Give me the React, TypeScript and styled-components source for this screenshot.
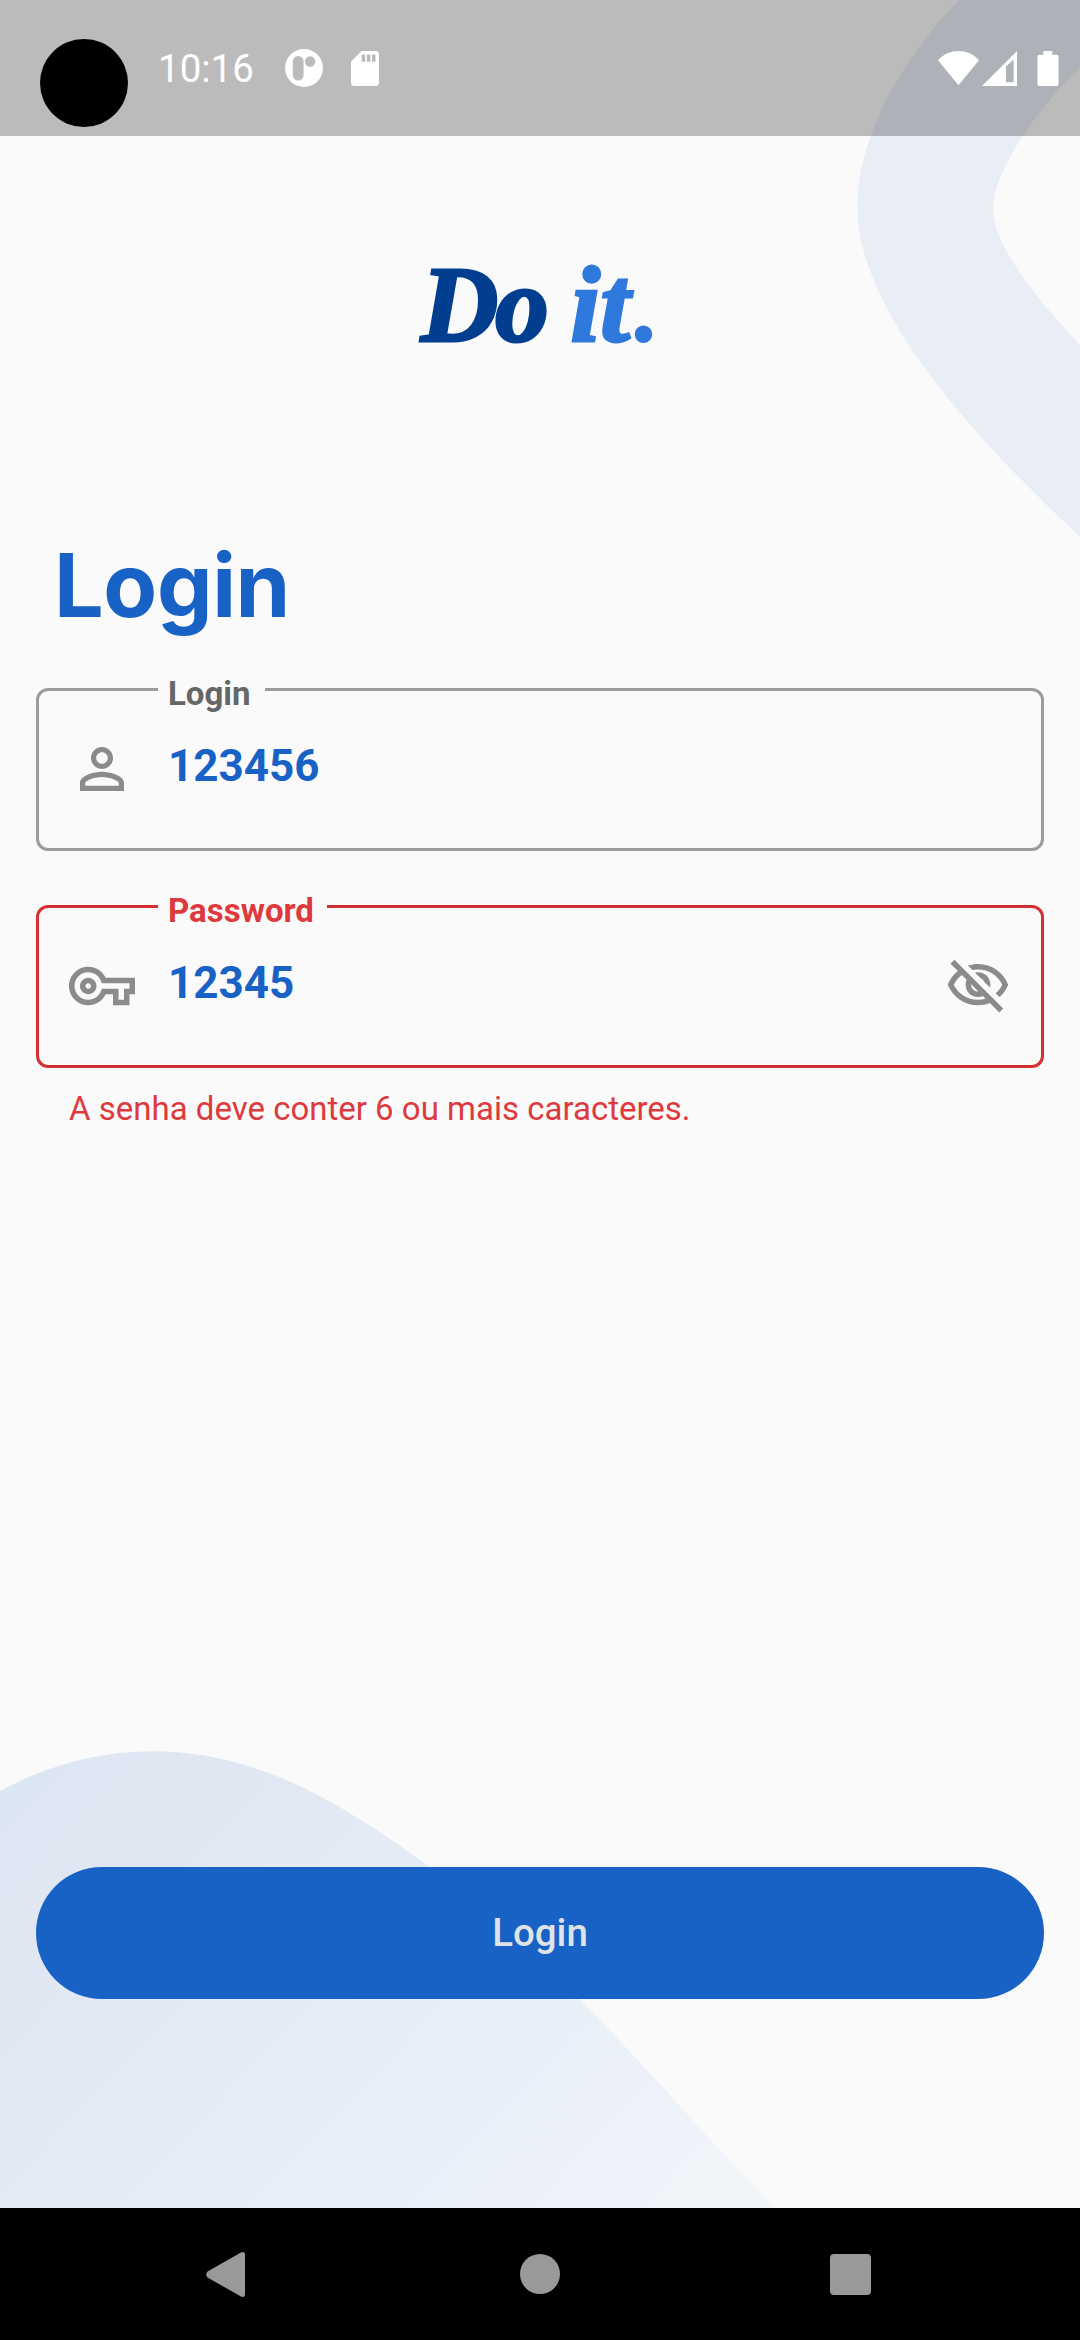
import React from "react";
import styled, { createGlobalStyle } from "styled-components";

const Global = createGlobalStyle`
  * { box-sizing: border-box; }
  html, body { margin: 0; padding: 0; background: #fafafa; }
  body { font-family: Roboto, "Liberation Sans", sans-serif; }
`;

const Screen = styled.div`
  position: relative;
  isolation: isolate;
  display: flex;
  flex-direction: column;
  width: 1080px;
  height: 2340px;
  overflow: hidden;
  background: #fafafa;
`;

const Backdrop = styled.svg`
  position: absolute;
  inset: 0;
  z-index: -1;
  display: block;
`;

const StatusBar = styled.header`
  display: flex;
  align-items: flex-start;
  height: 136px;
  padding: 39px 21px 0 40px;
  background: rgba(0, 0, 0, 0.25);
  color: #fff;
`;

const Camera = styled.span`
  width: 88px;
  height: 88px;
  border-radius: 50%;
  background: #000;
`;

const Clock = styled.time`
  margin: 7px 0 0 30px;
  width: 97px;
  font-size: 38.5px;
  line-height: 46px;
  white-space: nowrap;
`;

const StatusIcons = styled.div<{ $push?: boolean }>`
  display: flex;
  align-items: center;
  margin: 10px 0 0 ${(p) => (p.$push ? "auto" : "30px")};
  height: 38px;
`;

const StatusGlyph = styled.svg<{ $gap: number }>`
  display: block;
  flex: none;
  margin-left: ${(p) => p.$gap}px;
  fill: #fff;
`;

const Content = styled.main`
  display: flex;
  flex-direction: column;
  flex: 1;
  padding: 0 36px;
`;

const Logo = styled.div`
  display: flex;
  align-items: baseline;
  height: 120px;
  margin-top: 109px;
  padding-left: 385px;
  font-family: "Liberation Serif", serif;
  font-style: italic;
  font-weight: 700;
  font-size: 107px;
  line-height: 120px;
  white-space: pre;
`;

const LogoWord = styled.span<{ $color: string; $shift?: number; $stroke?: number; $tracking?: number }>`
  margin-left: ${(p) => p.$shift ?? 0}px;
  color: ${(p) => p.$color};
  letter-spacing: ${(p) => p.$tracking ?? 0}px;
  -webkit-text-stroke: ${(p) => p.$stroke ?? 3}px ${(p) => p.$color};
`;

const Title = styled.h1`
  margin: 167px 0 0 18px;
  height: 106px;
  color: #1861c5;
  font-family: Inter, Roboto, sans-serif;
  font-weight: 700;
  font-size: 88px;
  line-height: 106px;
  letter-spacing: -0.4px;
`;

const Field = styled.div<{ $error?: boolean }>`
  position: relative;
  display: flex;
  align-items: flex-start;
  height: 163px;
  padding: 45px 30px 0;
  border: 3px solid ${(p) => (p.$error ? "#d53031" : "#9c9c9c")};
  border-radius: 12px;
`;

const FieldLabel = styled.label<{ $error?: boolean; $width: number }>`
  position: absolute;
  top: -17px;
  left: 119px;
  width: ${(p) => p.$width}px;
  padding-left: 10px;
  background: #fafafa;
  color: ${(p) => (p.$error ? "#de3a3e" : "#666")};
  font-size: 33px;
  font-weight: 700;
  line-height: 39px;
  white-space: nowrap;
`;

const FieldIcon = styled.svg`
  display: block;
  flex: none;
  width: 66px;
  height: 66px;
  fill: #8b8b8b;
`;

const FieldInput = styled.input`
  flex: 1;
  min-width: 0;
  height: 52px;
  margin: 4px 0 0 33px;
  padding: 0;
  border: 0;
  outline: 0;
  background: transparent;
  color: #1861c5;
  font: 700 44px/52px Roboto, sans-serif;
`;

const Fields = styled.form`
  display: flex;
  flex-direction: column;
  gap: 54px;
  margin-top: 50px;
`;

const ErrorText = styled.p`
  margin: 21px 0 0 33px;
  color: #de3a3e;
  font-size: 33px;
  line-height: 39px;
`;

const SubmitButton = styled.button`
  height: 132px;
  margin-top: auto;
  margin-bottom: 209px;
  padding: 0;
  border: 0;
  border-radius: 66px;
  background: #1861c5;
  color: #dfe3e8;
  font: 500 38.5px/46px Roboto, sans-serif;
`;

const NavBar = styled.nav`
  display: grid;
  grid-template-columns: 314px 310px 41px;
  align-items: center;
  height: 132px;
  padding-left: 206px;
  background: #000;
`;

const NavIcon = styled.svg`
  display: block;
  fill: #999;
`;

const icons = {
  person:
    "M12 5.9c1.16 0 2.1.94 2.1 2.1s-.94 2.1-2.1 2.1S9.9 9.16 9.9 8s.94-2.1 2.1-2.1m0 9c2.97 0 6.1 1.46 6.1 2.1v1.1H5.9V17c0-.64 3.13-2.1 6.1-2.1M12 4C9.79 4 8 5.79 8 8s1.79 4 4 4 4-1.79 4-4-1.79-4-4-4zm0 9c-2.67 0-8 1.34-8 4v3h16v-3c0-2.66-5.33-4-8-4z",
  key: "M22 19h-6v-4h-2.68c-1.14 2.42-3.6 4-6.32 4-3.86 0-7-3.14-7-7s3.14-7 7-7c2.72 0 5.17 1.58 6.32 4H24v6h-2v4zm-4-2h2v-4h2v-2H11.94l-.23-.67C11.01 8.34 9.11 7 7 7c-2.76 0-5 2.24-5 5s2.24 5 5 5c2.11 0 4.01-1.34 4.71-3.33l.23-.67H18v4zM7 15c-1.65 0-3-1.35-3-3s1.35-3 3-3 3 1.35 3 3-1.35 3-3 3zm0-4c-.55 0-1 .45-1 1s.45 1 1 1 1-.45 1-1-.45-1-1-1z",
  eyeOff:
    "M12 6c3.79 0 7.17 2.13 8.82 5.5-.59 1.22-1.42 2.27-2.41 3.12l1.41 1.41c1.39-1.23 2.49-2.77 3.18-4.53C21.27 7.11 17 4 12 4c-1.27 0-2.49.2-3.64.57l1.65 1.65C10.66 6.09 11.32 6 12 6zm-1.07 1.14L13 9.21c.57.25 1.03.71 1.28 1.28l2.07 2.07c.08-.34.14-.7.14-1.07C16.5 9.01 14.48 7 12 7c-.37 0-.72.05-1.07.14zM2.01 3.87l2.68 2.68C3.06 7.83 1.77 9.53 1 11.5 2.73 15.89 7 19 12 19c1.52 0 2.98-.29 4.32-.82l3.42 3.42 1.41-1.41L3.42 2.45 2.01 3.87zm7.5 7.5l2.61 2.61c-.04.01-.08.02-.12.02-1.38 0-2.5-1.12-2.5-2.5 0-.05.01-.08.01-.13zm-3.4-3.4l1.75 1.75c-.23.55-.36 1.15-.36 1.78 0 2.48 2.02 4.5 4.5 4.5.63 0 1.23-.13 1.77-.36l.98.98c-.88.24-1.8.38-2.75.38-3.79 0-7.17-2.13-8.82-5.5.7-1.43 1.72-2.61 2.93-3.53z",
};

function Icon({ name }: { name: keyof typeof icons }) {
  return (
    <FieldIcon viewBox="0 0 24 24">
      <path d={icons[name]} />
    </FieldIcon>
  );
}

function Waves() {
  return (
    <Backdrop width="1080" height="2340" viewBox="0 0 1080 2340">
      <defs>
        <linearGradient id="wave" gradientUnits="userSpaceOnUse" x1="0" y1="1790" x2="560" y2="2330">
          <stop offset="0" stopColor="#dce6f2" />
          <stop offset="0.18" stopColor="#e0e7f3" />
          <stop offset="0.6" stopColor="#e6eef7" />
          <stop offset="0.9" stopColor="#eef2fa" />
          <stop offset="1" stopColor="#f1f4f8" />
        </linearGradient>
      </defs>
      <path
        fill="#e9eef6"
        d="M959 0C910 50 857.500 130 857.500 207C857.500 302 953 418 1080 537V345C1035 297 993 244 993 209C993 172 1035 112 1080 67V0Z"
      />
      <path fill="url(#wave)" d="M0 1791C98 1738 205 1738 310 1791C420 1847 530 1946 620 2041C680 2105 730 2163 776 2208V2340H0Z" />
    </Backdrop>
  );
}

export default function App() {
  return (
    <>
      <Global />
      <Screen>
        <Waves />
        <StatusBar>
          <Camera />
          <Clock>10:16</Clock>
          <StatusIcons>
            <StatusGlyph $gap={0} width="38" height="38" viewBox="0 0 38 38">
              <path
                fillRule="evenodd"
                d="M19 0a19 19 0 1 1 0 38a19 19 0 1 1 0-38zM13.2 7a5.4 5.4 0 0 0-5.4 5.4v13.8a5.4 5.4 0 0 0 10.8 0V12.4A5.4 5.4 0 0 0 13.2 7zM25.1 7.3a5.2 5.2 0 1 0 0 10.4a5.2 5.2 0 1 0 0-10.4z"
              />
            </StatusGlyph>
            <StatusGlyph $gap={28} width="28" height="35" viewBox="0 0 28 35">
              <path
                fillRule="evenodd"
                d="M10.5 0H24.5A3.5 3.5 0 0 1 28 3.5V31.5A3.5 3.5 0 0 1 24.5 35H3.5A3.5 3.5 0 0 1 0 31.5V10.5ZM10.7 3.5V10.7H14.2V3.5ZM15.9 3.5V10.7H19.4V3.5ZM21 3.5V10.7H24.5V3.5Z"
              />
            </StatusGlyph>
          </StatusIcons>
          <StatusIcons $push>
            <StatusGlyph $gap={0} width="41" height="35" viewBox="0 0 41 35">
              <path d="M0 9.2C11-3 30-3 41 9.2L20.5 34.3Z" />
            </StatusGlyph>
            <StatusGlyph $gap={3} width="35" height="35" viewBox="0 0 35 35">
              <path fillRule="evenodd" d="M35 0V35H0ZM31.6 8.4L24 15.5V31.3H31.6Z" />
            </StatusGlyph>
            <StatusGlyph $gap={20} width="22" height="35" viewBox="0 0 22 35">
              <path d="M6.3 0H15.3V3.7H19.5A2 2 0 0 1 21.5 5.7V33A2 2 0 0 1 19.5 35H2.5A2 2 0 0 1 .5 33V5.7A2 2 0 0 1 2.5 3.7H6.3Z" />
            </StatusGlyph>
          </StatusIcons>
        </StatusBar>
        <Content>
          <Logo>
            <LogoWord $color="#013e8f" $tracking={-3}>Do </LogoWord>
            <LogoWord $color="#2f78dc" $shift={1}>it</LogoWord>
            <LogoWord $color="#2f78dc" $shift={4} $stroke={0}>.</LogoWord>
          </Logo>
          <Title>Login</Title>
          <Fields>
            <Field>
              <FieldLabel htmlFor="login" $width={107}>Login</FieldLabel>
              <Icon name="person" />
              <FieldInput id="login" defaultValue="123456" />
            </Field>
            <Field $error>
              <FieldLabel htmlFor="password" $error $width={169}>Password</FieldLabel>
              <Icon name="key" />
              <FieldInput id="password" defaultValue="12345" />
              <Icon name="eyeOff" />
            </Field>
          </Fields>
          <ErrorText>A senha deve conter 6 ou mais caracteres.</ErrorText>
          <SubmitButton type="button">Login</SubmitButton>
        </Content>
        <NavBar>
          <NavIcon width="39" height="45" viewBox="0 0 39 45">
            <path d="M34.500 .8Q39-1.500 39 3V42Q39 46.500 34.500 44.200L1.500 25.500Q-1 22.500 1.500 19.500Z" />
          </NavIcon>
          <NavIcon width="40" height="40" viewBox="0 0 40 40">
            <circle cx="20" cy="20" r="20" />
          </NavIcon>
          <NavIcon width="41" height="41" viewBox="0 0 41 41">
            <rect width="41" height="41" rx="4" />
          </NavIcon>
        </NavBar>
      </Screen>
    </>
  );
}
